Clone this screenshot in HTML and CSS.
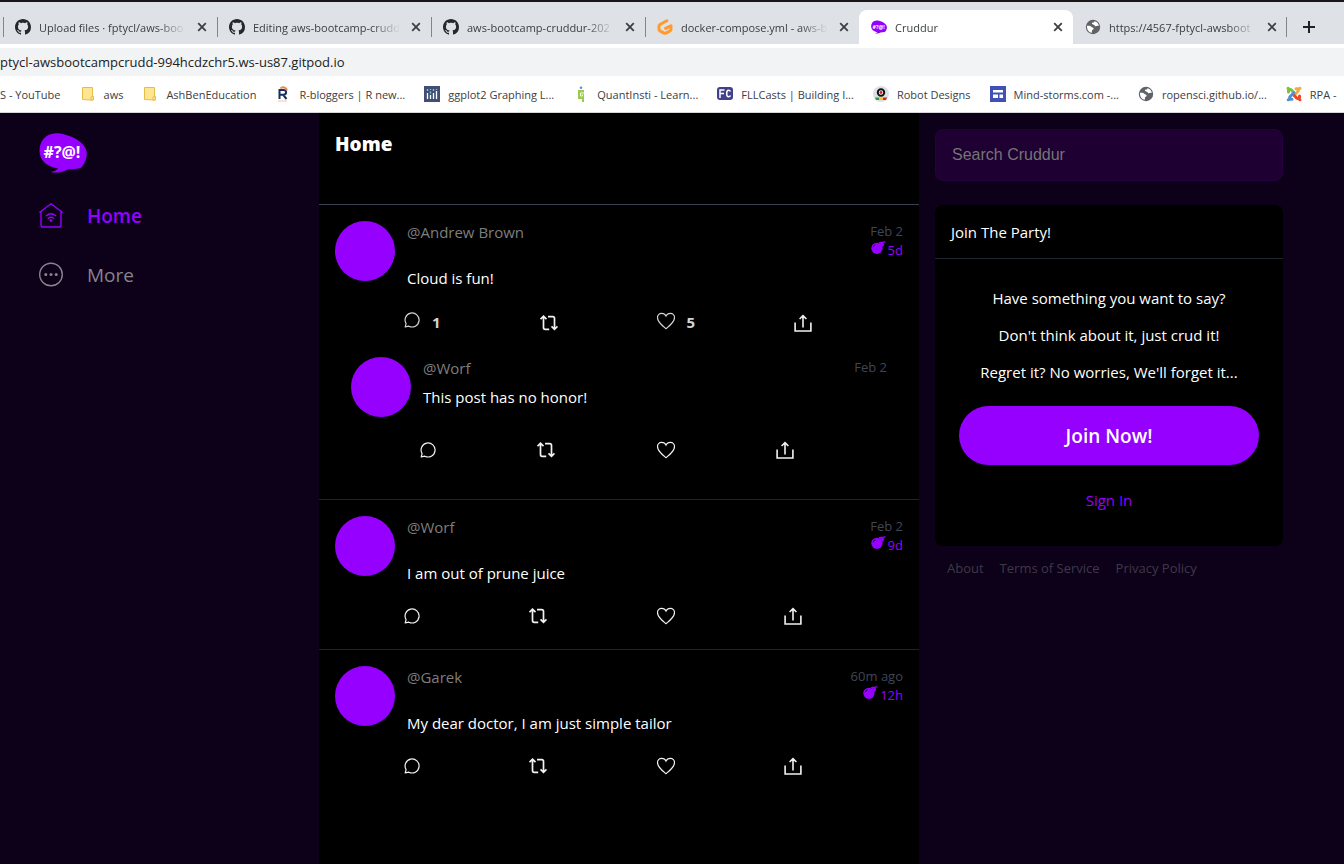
FILE: index.html
```html
<!DOCTYPE html>
<html lang="en">
<head>
<meta charset="utf-8">
<meta name="viewport" content="width=device-width, initial-scale=1">
<title>Cruddur</title>
<link rel="stylesheet" href="styles.css">
</head>
<body>
<svg class="sprite" aria-hidden="true">
  <symbol id="github" viewBox="0 0 16 16"><path fill="#24292e" d="M8 0C3.58 0 0 3.58 0 8c0 3.54 2.29 6.53 5.47 7.59.4.07.55-.17.55-.38 0-.19-.01-.82-.01-1.49-2.01.37-2.53-.49-2.69-.94-.09-.23-.48-.94-.82-1.13-.28-.15-.68-.52-.01-.53.63-.01 1.08.58 1.23.82.72 1.21 1.87.87 2.33.66.07-.52.28-.87.51-1.07-1.78-.2-3.64-.89-3.64-3.95 0-.87.31-1.59.82-2.15-.08-.2-.36-1.02.08-2.12 0 0 .67-.21 2.2.82.64-.18 1.32-.27 2-.27s1.36.09 2 .27c1.53-1.04 2.2-.82 2.2-.82.44 1.1.16 1.92.08 2.12.51.56.82 1.27.82 2.15 0 3.07-1.87 3.75-3.65 3.95.29.25.54.73.54 1.48 0 1.07-.01 1.93-.01 2.2 0 .21.15.46.55.38A8.01 8.01 0 0 0 16 8c0-4.42-3.58-8-8-8z"/></symbol>
  <symbol id="close" viewBox="0 0 16 16"><path d="M4.2 4.2l7.6 7.6M11.8 4.2l-7.6 7.6" fill="none" stroke="#3c4043" stroke-width="1.8"/></symbol>
  <symbol id="globe" viewBox="0 0 16 16"><circle cx="8" cy="8" r="7.2" fill="#5f6368"/><path fill="#fff" d="M2 6.800c2.400-.3 3.700.2 4.600 1.200.6.700 2.200.4 2 1.700-.2 1.200-1.600 1-1.700 2.200-.1.700.3 1.200-.2 1.900C3.600 13.400 1.700 10.500 2 6.800zM9.300 2.200c.3.900-.5 1.300-1.400 1.400-1 .1-1.200.8-.8 1.300.5.7 1.700.2 2.200 1.100.5 1 1.400 1.500 2.400 1.100.8-.4 1.400-.5 2.200-.1C13.500 4.400 11.700 2.700 9.300 2.200z"/></symbol>
  <symbol id="folder" viewBox="0 0 16 16"><path d="M2.500 1.500h10v10l1 1v1.500h-2l-9-.500z" fill="#ffe592" stroke="#e3bf4a"/><path d="M11 14.500v-3.500l2.500-.500v3z" fill="#ffe592" stroke="#e3bf4a"/></symbol>
  <symbol id="comment" viewBox="0 0 16 16"><path d="M1.200 14.800L2.100 11.600A7 7 0 1 1 4.900 14.200L1.200 14.800z" fill="none" stroke="currentColor" stroke-width="1.200" stroke-linejoin="round"/></symbol>
  <symbol id="repost" viewBox="0 0 18 18"><path d="M.5 5.200L3.500 2.200l3 3M3.500 2.600v10.900c0 1.100.6 1.900 1.700 1.900h4M8 2.600h4.700c1 0 1.800.7 1.800 1.700v11M11.500 12.400l3 3 3-3" fill="none" stroke="currentColor" stroke-width="1.700"/></symbol>
  <symbol id="heart" viewBox="0 0 18 18"><path d="M9 16.700C7.900 15.500.5 10.700.5 5.600.5 3.200 2.300 1.300 4.600 1.300 6.700 1.300 8.300 2.500 9 4c.7-1.500 2.300-2.700 4.400-2.700 2.300 0 4.100 1.900 4.100 4.300C17.500 10.700 10.100 15.500 9 16.700z" fill="none" stroke="currentColor" stroke-width="1.200"/></symbol>
  <symbol id="share" viewBox="0 0 18 18"><path d="M1.100 8.500V17h15.800V8.500M9 13.500V1.800M5.600 5L9 1.600 12.400 5" fill="none" stroke="currentColor" stroke-width="1.600"/></symbol>
  <symbol id="bomb" viewBox="0 0 16 14"><circle cx="6.300" cy="7.300" r="6" fill="currentColor"/><path d="M9 1.500l3.500 3.500 1-2L11 .8zM11.500 1.800Q13 .2 15.500.6" fill="currentColor" stroke="currentColor" stroke-width="1.200"/><path d="M2.200 6.200c.5-1.400 1.300-2.200 2.600-2.700" stroke="#000" fill="none" stroke-width=".8"/></symbol>
  <symbol id="bubble" viewBox="0 0 48 40"><path fill="#9500ff" d="M17 .2C28 .2 46.500 8 47.700 19c.5 6-1.500 11-5.200 15.500-4 2-9 1.500-13.500 1.700-5 2.800-10.500 4.300-17.500 2.800 3-.3 6-1.500 7.500-3.500C10 34 .9 29 .5 18.500.2 9 6 .5 17 .2z"/><text x="23" y="25" class="bubble-text">#?@!</text></symbol>
</svg>

<header class="browser">
  <div class="tabs">
    <div class="tab"><svg class="favicon"><use href="#github"/></svg><span class="tab-title">Upload files · fptycl/aws-boo</span><button class="close" aria-label="Close tab"><svg class="favicon"><use href="#close"/></svg></button></div>
    <div class="tab"><svg class="favicon"><use href="#github"/></svg><span class="tab-title">Editing aws-bootcamp-crudd</span><button class="close" aria-label="Close tab"><svg class="favicon"><use href="#close"/></svg></button></div>
    <div class="tab"><svg class="favicon"><use href="#github"/></svg><span class="tab-title">aws-bootcamp-cruddur-202</span><button class="close" aria-label="Close tab"><svg class="favicon"><use href="#close"/></svg></button></div>
    <div class="tab"><svg class="favicon" viewBox="0 0 16 16"><path d="M9.800 1.800L3 5.500Q2 6.100 2 7.200v3q0 1.100 1 1.700l4 2.200q1 .5 2 0l4-2.200q1-.6 1-1.700V6.800L8.600 9.400" fill="none" stroke="#ff9b2e" stroke-width="3" stroke-linejoin="round" stroke-linecap="round"/></svg><span class="tab-title">docker-compose.yml - aws-b</span><button class="close" aria-label="Close tab"><svg class="favicon"><use href="#close"/></svg></button></div>
    <div class="tab tab-active"><svg class="favicon"><use href="#bubble"/></svg><span class="tab-title">Cruddur</span><button class="close" aria-label="Close tab"><svg class="favicon"><use href="#close"/></svg></button></div>
    <div class="tab tab-last"><svg class="favicon"><use href="#globe"/></svg><span class="tab-title">https://4567-fptycl-awsboot</span><button class="close" aria-label="Close tab"><svg class="favicon"><use href="#close"/></svg></button></div>
    <button class="new-tab" aria-label="New tab"><svg class="favicon" viewBox="0 0 16 16"><path d="M8 2v12M2 8h12" stroke="#202124" stroke-width="2"/></svg></button>
  </div>
  <div class="toolbar"><input class="address" aria-label="Address" value="ptycl-awsbootcampcrudd-994hcdzchr5.ws-us87.gitpod.io"></div>
  <nav class="bookmarks" aria-label="Bookmarks">
    <a href="#">S - YouTube</a>
    <a href="#"><svg class="favicon"><use href="#folder"/></svg>aws</a>
    <a href="#"><svg class="favicon"><use href="#folder"/></svg>AshBenEducation</a>
    <a href="#"><svg class="favicon" viewBox="0 0 16 16"><path d="M4.500 13V4h4q2.600 0 2.600 2.300T8.500 8.700H5M8 8.700l3.500 4.300" fill="none" stroke="#16325c" stroke-width="2"/><path d="M5.500 2.500c2-2.500 6-1 6.500 2" fill="none" stroke="#e08a5c" stroke-width="2"/><path d="M3 15h9" stroke="#f2c6ae"/></svg>R-bloggers | R new...</a>
    <a href="#"><svg class="favicon" viewBox="0 0 16 16"><path fill="#3f4f75" d="M0 0h16v16H0z"/><path d="M3.500 7v6M6.500 9v4M9.500 7v6M12.500 5v8" stroke="#fff" stroke-width="1.300"/><path d="M3.500 3v2M6.500 3v1M6.500 5.500v2M9.500 3v2M12.500 3v1" stroke="#80cfbe" stroke-width="1.300"/></svg>ggplot2 Graphing L...</a>
    <a href="#"><svg class="favicon" viewBox="0 0 16 16"><circle cx="8" cy="1.700" r="1.300" fill="#5b8fd0"/><path d="M5 4h6v12H9v-3H5z" fill="#9bcb4b"/><path d="M11 7H7.500v3H9.500V8.500" fill="none" stroke="#fff" stroke-width=".9"/></svg>QuantInsti - Learn...</a>
    <a href="#"><svg class="favicon" viewBox="0 0 16 16"><rect y="1" width="16" height="13" rx="3" fill="#41408c"/><path d="M3 12V4h4.500M3 7.500h4M13.500 5.500Q13 4.200 11.500 4.200 9.700 4.200 9.700 7.500t1.800 3.300q1.500 0 2-1.300" fill="none" stroke="#fff" stroke-width="1.500"/></svg>FLLCasts | Building I...</a>
    <a href="#"><svg class="favicon" viewBox="0 0 16 16"><circle cx="8" cy="8" r="8" fill="#dcdfe6"/><circle cx="8" cy="6.500" r="3.200" fill="#fff" stroke="#111" stroke-width="2"/><circle cx="8" cy="6.500" r="1.400" fill="#d22"/><path d="M2 11.500h4V14H3z" fill="#2e9b45"/><path d="M6 11.500h4V14H6z" fill="#f5c518"/><path d="M10 11.500h4L13 14h-3z" fill="#d22"/></svg>Robot Designs</a>
    <a href="#"><svg class="favicon" viewBox="0 0 16 16"><path fill="#3f51b5" d="M0 0h16v16H0z"/><path d="M3 4h10v2.500H3zM3 8.500h5V12H3zM9.500 8.500H13V12H9.500z" fill="#fff"/></svg>Mind-storms.com -...</a>
    <a href="#"><svg class="favicon"><use href="#globe"/></svg>ropensci.github.io/...</a>
    <a href="#"><svg class="favicon" viewBox="0 0 16 16"><g fill="none" stroke-width="3" stroke-linecap="round"><path d="M2.500 6V4.500Q4 2.800 5.500 4.200L9 7.700M2 2.200h.3" stroke="#7ac143"/><path d="M10 2.700h1.500Q13.200 4 11.800 5.500L8.300 9M13.800 2.200h.2" stroke="#f9a541"/><path d="M13.500 10v1.500Q12 13.200 10.500 11.800L7 8.300M13.800 13.800h.2" stroke="#f44321"/><path d="M6 13.300H4.500Q2.800 12 4.200 10.500L7.700 7M2.200 13.800h.2" stroke="#5091cd"/></g></svg>RPA -</a>
  </nav>
</header>

<div class="app">
  <nav class="sidebar" aria-label="Main">
    <svg class="logo" role="img" aria-label="Cruddur"><use href="#bubble"/></svg>
    <a class="nav-item nav-active" href="#"><svg class="nav-icon" viewBox="0 0 24 25"><g fill="none" stroke="currentColor" stroke-width="1.400" stroke-linecap="round" stroke-linejoin="round"><path d="M.8 9.200L12 .8l11.200 8.400M2 8.500v14q0 1.500 1.500 1.500h17q1.500 0 1.500-1.500v-14"/><path d="M7.200 12.800q4.800-4 9.600 0M9.300 15.200q2.700-2 5.400 0"/></g><circle cx="12" cy="17.600" r="1.300" fill="currentColor"/></svg><span>Home</span></a>
    <a class="nav-item" href="#"><svg class="nav-icon" viewBox="0 0 24 25"><circle cx="12" cy="12.500" r="11.300" fill="none" stroke="currentColor" stroke-width="1.400"/><g fill="currentColor"><circle cx="6.800" cy="12.500" r="1.500"/><circle cx="12" cy="12.500" r="1.500"/><circle cx="17.200" cy="12.500" r="1.500"/></g></svg><span>More</span></a>
  </nav>

  <main class="feed">
    <header class="feed-head"><h1>Home</h1></header>

    <article class="activity">
      <div class="post">
        <div class="avatar"></div>
        <div class="main">
          <div class="head"><span>@Andrew Brown</span><div class="meta"><time>Feb 2</time><span class="expiry"><svg class="bomb"><use href="#bomb"/></svg>5d</span></div></div>
          <p class="message">Cloud is fun!</p>
        </div>
      </div>
      <div class="actions">
        <div class="action"><button class="counted" aria-label="1 reply"><svg class="icon-s"><use href="#comment"/></svg><span>1</span></button></div>
        <div class="action"><button aria-label="Repost"><svg class="icon"><use href="#repost"/></svg></button></div>
        <div class="action"><button class="counted" aria-label="5 likes"><svg class="icon"><use href="#heart"/></svg><span>5</span></button></div>
        <div class="action"><button aria-label="Share"><svg class="icon"><use href="#share"/></svg></button></div>
      </div>
      <article class="reply">
        <div class="post">
          <div class="avatar"></div>
          <div class="main">
            <div class="head"><span>@Worf</span><div class="meta"><time>Feb 2</time></div></div>
            <p class="message">This post has no honor!</p>
          </div>
        </div>
        <div class="actions">
          <div class="action"><button aria-label="Reply"><svg class="icon-s"><use href="#comment"/></svg></button></div>
          <div class="action"><button aria-label="Repost"><svg class="icon"><use href="#repost"/></svg></button></div>
          <div class="action"><button aria-label="Like"><svg class="icon"><use href="#heart"/></svg></button></div>
          <div class="action"><button aria-label="Share"><svg class="icon"><use href="#share"/></svg></button></div>
        </div>
      </article>
    </article>

    <article class="activity">
      <div class="post">
        <div class="avatar"></div>
        <div class="main">
          <div class="head"><span>@Worf</span><div class="meta"><time>Feb 2</time><span class="expiry"><svg class="bomb"><use href="#bomb"/></svg>9d</span></div></div>
          <p class="message">I am out of prune juice</p>
        </div>
      </div>
      <div class="actions">
        <div class="action"><button aria-label="Reply"><svg class="icon-s"><use href="#comment"/></svg></button></div>
        <div class="action"><button aria-label="Repost"><svg class="icon"><use href="#repost"/></svg></button></div>
        <div class="action"><button aria-label="Like"><svg class="icon"><use href="#heart"/></svg></button></div>
        <div class="action"><button aria-label="Share"><svg class="icon"><use href="#share"/></svg></button></div>
      </div>
    </article>

    <article class="activity">
      <div class="post">
        <div class="avatar"></div>
        <div class="main">
          <div class="head"><span>@Garek</span><div class="meta"><time>60m ago</time><span class="expiry"><svg class="bomb"><use href="#bomb"/></svg>12h</span></div></div>
          <p class="message">My dear doctor, I am just simple tailor</p>
        </div>
      </div>
      <div class="actions">
        <div class="action"><button aria-label="Reply"><svg class="icon-s"><use href="#comment"/></svg></button></div>
        <div class="action"><button aria-label="Repost"><svg class="icon"><use href="#repost"/></svg></button></div>
        <div class="action"><button aria-label="Like"><svg class="icon"><use href="#heart"/></svg></button></div>
        <div class="action"><button aria-label="Share"><svg class="icon"><use href="#share"/></svg></button></div>
      </div>
    </article>
  </main>

  <aside class="side">
    <input class="search" type="text" placeholder="Search Cruddur" aria-label="Search Cruddur">
    <section class="join">
      <h2>Join The Party!</h2>
      <div class="join-body">
        <p>Have something you want to say?</p>
        <p>Don't think about it, just crud it!</p>
        <p>Regret it? No worries, We'll forget it...</p>
        <a class="join-now" href="#">Join Now!</a>
        <a class="sign-in" href="#">Sign In</a>
      </div>
    </section>
    <footer class="links"><a href="#">About</a><a href="#">Terms of Service</a><a href="#">Privacy Policy</a></footer>
  </aside>
</div>
</body>
</html>
```
FILE: styles.css
```css
:root {
  --purple: #9500ff;
  --page: #0c0119;
}
* { box-sizing: border-box; }
body {
  margin: 0;
  min-height: 100vh;
  display: flex;
  flex-direction: column;
  background: var(--page);
  color: #fff;
  font: 15px/21px "Open Sans", "Noto Sans", sans-serif;
}
h1, h2, p { margin: 0; }
a { color: inherit; text-decoration: none; }
button { padding: 0; border: 0; background: none; color: inherit; font: inherit; }
svg { display: block; flex: none; }
.sprite { position: absolute; width: 0; height: 0; }
.bubble-text { fill: #fff; font: 700 16px "Open Sans", sans-serif; text-anchor: middle; }

/* Browser frame */
.browser {
  border-top: 2px solid #1a1517;
  border-bottom: 1px solid #d5d5da;
  background: #fff;
  color: #3c4043;
  font-size: 11px;
}
.favicon { width: 16px; height: 16px; }
.tabs {
  display: flex;
  height: 42px;
  padding: 8px 0 0 3px;
  background: #dee1e6;
}
.tab {
  flex: 0 1 214px;
  min-width: 0;
  display: flex;
  align-items: center;
  gap: 8px;
  padding: 0 7px 0 12px;
  background: linear-gradient(#80868b, #80868b) left center / 1px 20px no-repeat;
}
.tab-active { background: #fff; border-radius: 8px 8px 0 0; }
.tab-last { background-position: right center; }
.tab-title {
  flex: 1;
  overflow: hidden;
  white-space: nowrap;
  mask-image: linear-gradient(to right, #000 calc(100% - 28px), transparent);
}
.new-tab { margin-left: 14px; }
.toolbar { padding-top: 4px; }
.address {
  display: block;
  width: 100%;
  height: 28px;
  padding: 0;
  border: 0;
  background: #f1f3f4;
  color: #202124;
  font: 13px "Open Sans", "Noto Sans", sans-serif;
}
.bookmarks {
  display: flex;
  align-items: center;
  gap: 19px;
  height: 36px;
  overflow: hidden;
  white-space: nowrap;
}
.bookmarks a { display: flex; align-items: center; gap: 8px; }

/* App columns */
.app {
  flex: 1;
  display: grid;
  grid-template-columns: 319fr 600fr 425fr;
}
.sidebar { padding: 20px 16px 20px 39px; }
.logo { width: 48px; height: 40px; margin-bottom: 13px; }
.nav-item {
  display: flex;
  align-items: center;
  gap: 24px;
  height: 59px;
  color: #88838e;
  font-size: 19px;
}
.nav-item span { padding-top: 2px; }
.nav-active { color: var(--purple); font-weight: 600; }
.nav-icon { width: 24px; height: 25px; }

/* Feed */
.feed { background: #000; }
.feed-head {
  height: 92px;
  padding: 21px 16px;
  border-bottom: 1px solid #3b4150;
}
.feed-head h1 { font-size: 19px; line-height: 21px; font-weight: 800; }
.activity { padding: 16px; border-bottom: 1px solid #1f2430; }
.activity:last-child { border-bottom: 0; }
.reply { padding: 16px; }
.post { display: flex; gap: 12px; }
.avatar { flex: none; width: 60px; height: 60px; border-radius: 50%; background: var(--purple); }
.main { flex: 1; padding-top: 1px; }
.head { display: flex; justify-content: space-between; margin-bottom: 8px; color: #7e7e7e; }
.meta { color: #3f4656; font-size: 13px; line-height: 19px; text-align: right; }
.meta time { display: block; }
.expiry { display: flex; justify-content: flex-end; gap: 2px; color: var(--purple); }
.bomb { width: 15px; height: 14px; }
.actions {
  display: flex;
  align-items: center;
  margin: 15px -8px 0 69px;
  padding: 8px 0;
  color: #f2f2f2;
}
.reply .actions { margin-top: 16px; }
.action { flex: 1 1 auto; }
.actions button { display: flex; }
.counted { gap: 12px; font-weight: 700; color: #d5d5d5; }
.icon { width: 18px; height: 18px; }
.icon-s { width: 16px; height: 16px; }

/* Right column */
.side { padding: 16px; }
.side > * { max-width: 348px; }
.search {
  display: block;
  width: 100%;
  height: 52px;
  padding: 0 16px;
  border: 1px solid #260040;
  border-radius: 8px;
  background: #1e0033;
  color: #fff;
  font: 16px "Liberation Sans", sans-serif;
}
.search::placeholder { color: #757575; }
.join { margin-top: 24px; border-radius: 8px; background: #000; }
.join h2 {
  padding: 17px 16px 15px;
  border-bottom: 1px solid #1f2430;
  font-size: 15px;
  font-weight: 400;
}
.join-body { padding: 29px 24px 35px; text-align: center; }
.join-body p { margin-bottom: 16px; }
.join-now {
  display: block;
  margin: 23px 0 25px;
  padding-top: 2px;
  border-radius: 30px;
  background: var(--purple);
  font-size: 19px;
  font-weight: 600;
  line-height: 57px;
}
.sign-in { color: var(--purple); }
.links {
  display: flex;
  flex-wrap: wrap;
  gap: 16px;
  padding: 12px;
  color: #403848;
  font-size: 13px;
}
```
